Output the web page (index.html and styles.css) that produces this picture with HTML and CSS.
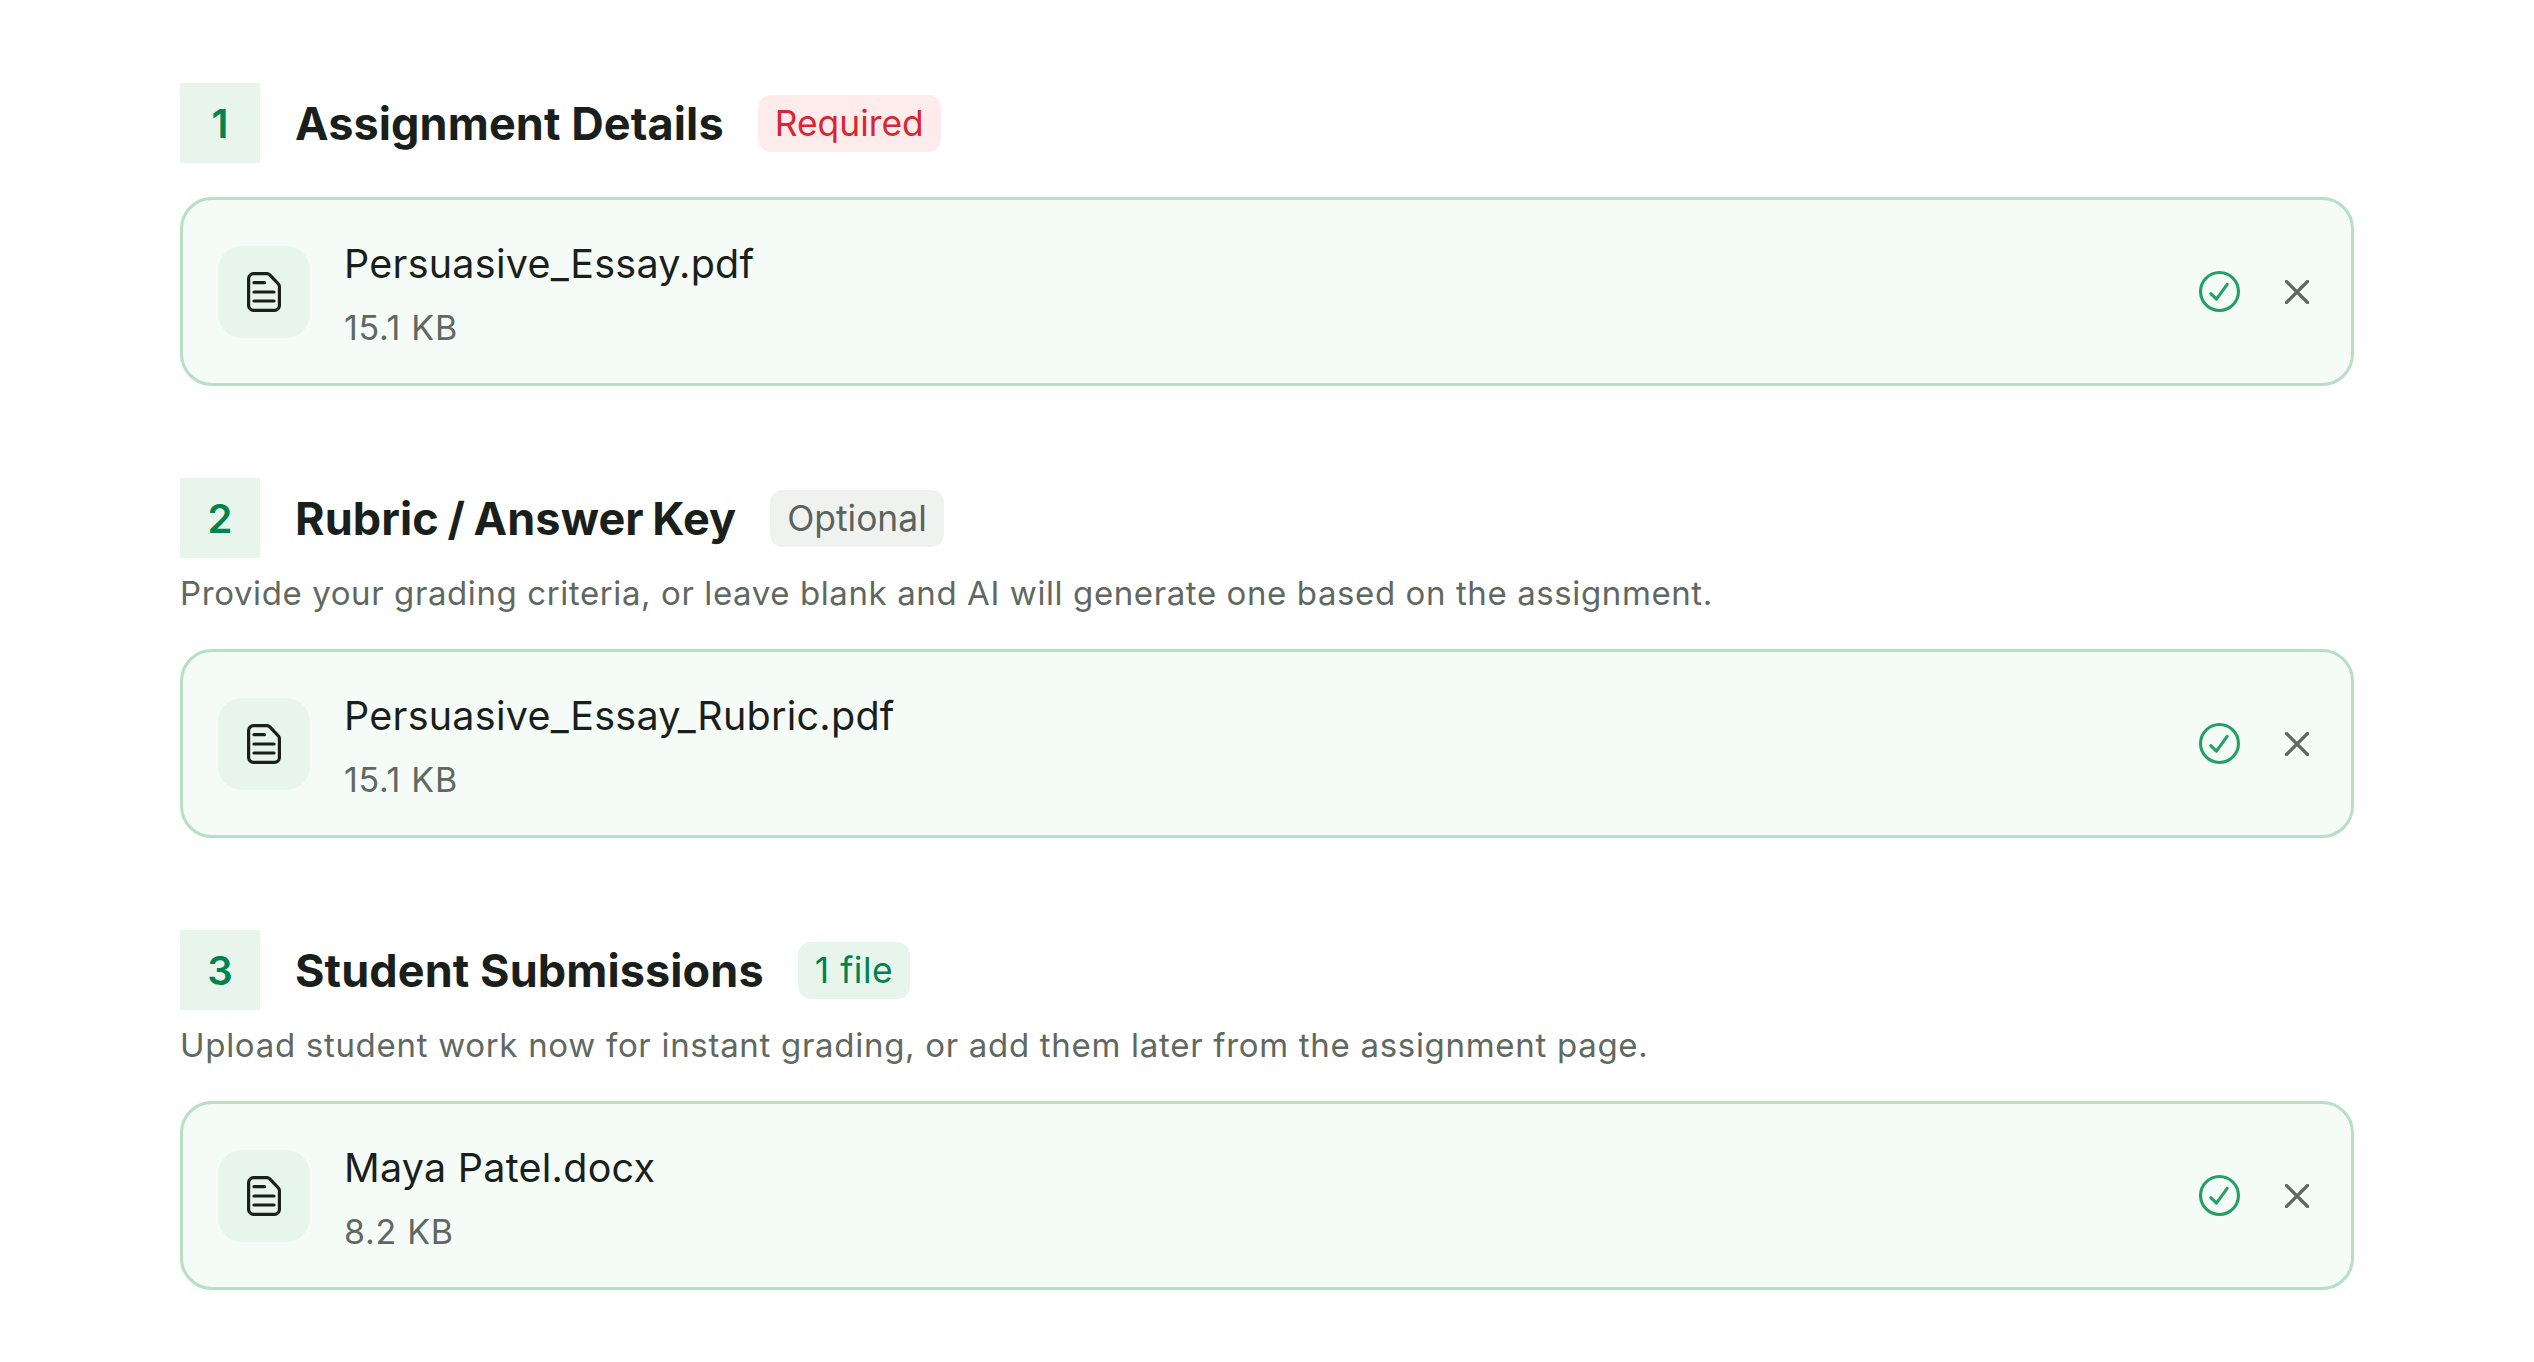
FILE: index.html
```html
<!DOCTYPE html>
<html lang="en">
<head>
<meta charset="UTF-8" />
<title>New Assignment</title>
<link rel="stylesheet" href="styles.css">
</head>
<body>
<svg class="sprite" width="0" height="0">
  <symbol id="fileIcon" viewBox="0 0 34 40">
    <path d="M6.500 1.600H20c1 0 1.900.4 2.600 1.100l8.700 9.200c.7.700 1.100 1.600 1.100 2.600V33.500c0 2.700-2.200 4.900-4.900 4.900h-21c-2.700 0-4.900-2.200-4.900-4.900V6.500c0-2.700 2.200-4.900 4.900-4.900z" />
    <path d="M7 10.700h10.500M7 20h20M7 29h20" />
  </symbol>
  <symbol id="checkIcon" viewBox="0 0 40 40">
    <circle cx="20" cy="20" r="18.500" />
    <path d="M11.500 22l5.500 5.500L27.500 13" />
  </symbol>
  <symbol id="closeIcon" viewBox="0 0 24 24">
    <path d="M1.500 1.500l21 21M22.500 1.500l-21 21" />
  </symbol>
</svg>

<main class="page">
  <section class="step">
    <div class="step-head">
      <div class="step-num">1</div>
      <h2>Assignment Details</h2>
      <span class="tag tag-red">Required</span>
    </div>
    <div class="file-card">
      <div class="file-tile"><svg class="icon-file"><use href="#fileIcon"></use></svg></div>
      <div class="file-info">
        <div class="file-name">Persuasive_Essay.pdf</div>
        <div class="file-size">15.1 KB</div>
      </div>
      <svg class="icon-check"><use href="#checkIcon"></use></svg>
      <svg class="icon-close"><use href="#closeIcon"></use></svg>
    </div>
  </section>

  <section class="step">
    <div class="step-head">
      <div class="step-num">2</div>
      <h2 class="title-tight">Rubric / Answer Key</h2>
      <span class="tag tag-grey">Optional</span>
    </div>
    <p class="step-desc">Provide your grading criteria, or leave blank and AI will generate one based on the assignment.</p>
    <div class="file-card">
      <div class="file-tile"><svg class="icon-file"><use href="#fileIcon"></use></svg></div>
      <div class="file-info">
        <div class="file-name">Persuasive_Essay_Rubric.pdf</div>
        <div class="file-size">15.1 KB</div>
      </div>
      <svg class="icon-check"><use href="#checkIcon"></use></svg>
      <svg class="icon-close"><use href="#closeIcon"></use></svg>
    </div>
  </section>

  <section class="step">
    <div class="step-head">
      <div class="step-num">3</div>
      <h2>Student Submissions</h2>
      <span class="tag tag-green">1 file</span>
    </div>
    <p class="step-desc step-desc-wide">Upload student work now for instant grading, or add them later from the assignment page.</p>
    <div class="file-card">
      <div class="file-tile"><svg class="icon-file"><use href="#fileIcon"></use></svg></div>
      <div class="file-info">
        <div class="file-name">Maya Patel.docx</div>
        <div class="file-size">8.2 KB</div>
      </div>
      <svg class="icon-check"><use href="#checkIcon"></use></svg>
      <svg class="icon-close"><use href="#closeIcon"></use></svg>
    </div>
  </section>
</main>
</body>
</html>
```

FILE: styles.css
```css
* {
  margin: 0;
  padding: 0;
  box-sizing: border-box;
}
body {
  font-family: 'Inter', 'Liberation Sans', sans-serif;
  background: #fff;
  color: #1a1f1c;
}
.sprite {
  position: absolute;
}
.page {
  padding: 83px 180px 0 180px;
  display: flex;
  flex-direction: column;
  gap: 92px;
}
.step-head {
  display: flex;
  align-items: center;
  height: 80px;
}
.step-num {
  width: 80px;
  height: 80px;
  display: flex;
  justify-content: center;
  align-items: center;
  background: #e8f5ec;
  color: #00834f;
  font-size: 40px;
  font-weight: 600;
  margin-right: 35px;
}
h2 {
  font-size: 45px;
  font-weight: 700;
  letter-spacing: 0.1px;
  margin-right: 34px;
}
.title-tight {
  word-spacing: -2.2px;
}
.tag {
  height: 57px;
  display: flex;
  align-items: center;
  padding: 0 17px;
  border-radius: 13px;
  font-size: 35.4px;
  font-weight: 400;
}
.tag-red {
  background: #feecec;
  color: #d92632;
}
.tag-grey {
  background: #eff2ee;
  color: #5a635d;
}
.tag-green {
  background: #e8f5ec;
  color: #00834f;
  letter-spacing: 0.55px;
}
.step-desc {
  font-size: 33px;
  line-height: 40px;
  letter-spacing: 0.6px;
  color: #5f6861;
  margin-top: 15px;
  margin-bottom: 36px;
}
.step-desc-wide {
  letter-spacing: 0.7px;
}
.step-head + .file-card {
  margin-top: 34px;
}
.file-card {
  height: 189px;
  display: flex;
  align-items: center;
  padding: 0 35px;
  background: #f5fbf7;
  border: 3px solid #b5e0c4;
  border-radius: 32px;
}
.file-tile {
  width: 92px;
  height: 92px;
  flex-shrink: 0;
  display: flex;
  justify-content: center;
  align-items: center;
  background: #e8f5ec;
  border-radius: 24px;
  margin-right: 34px;
}
.icon-file {
  width: 34px;
  height: 40px;
  fill: none;
  stroke: #1a1f1c;
  stroke-width: 3.2;
  stroke-linecap: round;
  stroke-linejoin: round;
}
.file-info {
  flex: 1;
  padding-top: 4px;
}
.file-name {
  font-size: 39.5px;
  line-height: 48px;
  letter-spacing: 0.25px;
  margin-bottom: 20px;
}
.file-size {
  font-size: 34px;
  line-height: 40px;
  letter-spacing: 0.7px;
  color: #5f6861;
}
.icon-check {
  width: 41px;
  height: 41px;
  fill: none;
  stroke: #25a065;
  stroke-width: 3;
  stroke-linecap: round;
  stroke-linejoin: round;
  margin-right: 45px;
}
.icon-close {
  width: 24px;
  height: 24px;
  fill: none;
  stroke: #5f6861;
  stroke-width: 3.2;
  stroke-linecap: round;
  margin-right: 7px;
}
```
